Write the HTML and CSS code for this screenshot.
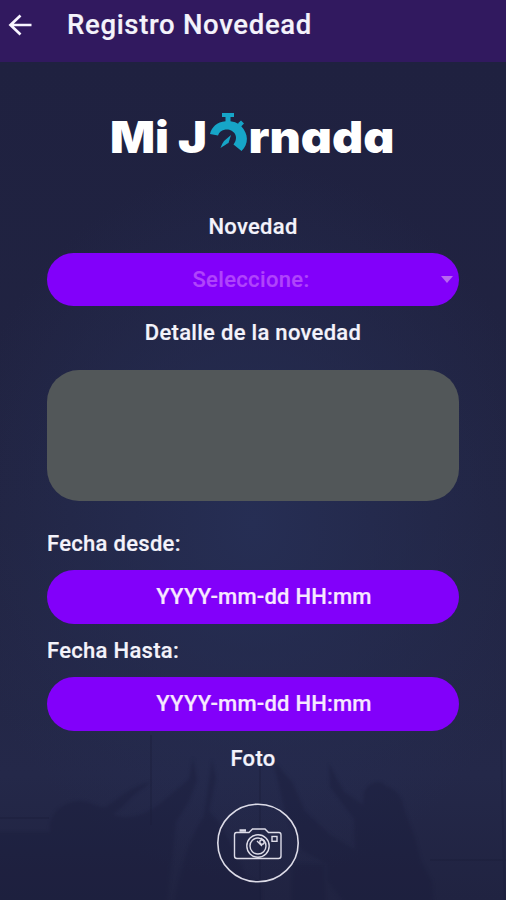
FILE: index.html
```html
<!DOCTYPE html>
<html lang="es">
<head>
<meta charset="utf-8">
<meta name="viewport" content="width=device-width, initial-scale=1">
<title>Registro Novedead</title>
<link rel="stylesheet" href="styles.css">
</head>
<body>
<div class="screen">
  <header class="bar">
    <svg class="back" width="26" height="24" viewBox="0 0 26 24"><path d="M24.500 12H3.500M13.500 2.500L3.500 12l10 9.500" /></svg>
    <h1 class="title">Registro Novedead</h1>
  </header>
  <main class="content">
    <svg class="scene" viewBox="0 0 506 190" aria-hidden="true">
      <g class="lines"><path d="M151 25V115M260 40V200M0 108H49M430 150H506M501 30L505 200"/></g>
      <g class="people">
        <path d="M-5 122H50C48 106 60 92 80 91C94 92 98 99 106 97C121 87 132 76 150 72L144 78C132 84 124 98 113 104C126 112 147 104 160 94L189 69L193 48L197 70L189 91L176 112L166 200H-5Z"/>
        <path d="M173 200C181 157 188 132 204 106L212 50L216 68L209 101L220 114L235 142L246 166L262 177V200Z"/>
        <path d="M273 50L292 72L305 101L330 125L355 140L354 109L330 77L329 54L344 82L363 95L364 82C370 71 380 69 386 76C398 80 402 88 404 99L415 128L421 151L432 171L434 200H350L327 170V154L302 140L286 105Z"/>
        <path d="M292 154H325V200H292Z"/>
      </g>
    </svg>
    <svg class="logo" width="286" height="46" viewBox="0 0 286 46" role="img" aria-label="Mi Jornada">
      <g class="word">
        <text x="0" y="41" textLength="59" lengthAdjust="spacingAndGlyphs">Mi</text>
        <text x="68" y="41" textLength="29" lengthAdjust="spacingAndGlyphs">J</text>
        <text x="138.500" y="41" textLength="146" lengthAdjust="spacingAndGlyphs">rnada</text>
      </g>
      <g class="watch">
        <path d="M112 1H124V5H120.500V9.200C124 9.700 126.500 10.500 129 12.300L128 11.300L131 8.500L134 11.500L131.300 14.300C138.500 22 139 32 131.500 39L123.500 32.500C130 24 123 16.500 115.500 17.500C111.500 18 109 20 108 23.500L100 22C101.500 15 107 10 115.500 9.200V5H112Z"/>
        <path d="M121 23L118.500 31C116.500 32 114.500 33.500 110.500 36C112 32 113 30.500 114 29Z"/>
      </g>
    </svg>
    <form class="form">
      <div class="label center">Novedad</div>
      <div class="pill select"><span class="placeholder">Seleccione:</span><i class="caret"></i></div>
      <div class="label center detail">Detalle de la novedad</div>
      <div class="area"></div>
      <div class="label from">Fecha desde:</div>
      <div class="pill date">YYYY-mm-dd HH:mm</div>
      <div class="label to">Fecha Hasta:</div>
      <div class="pill date">YYYY-mm-dd HH:mm</div>
      <div class="label center photo">Foto</div>
    </form>
    <svg class="camera" width="84" height="82" viewBox="0 0 84 82">
      <ellipse class="ring" cx="42" cy="41" rx="40.200" ry="38.800"/>
      <path d="M20.500 30.500H33L36.500 27H49L52.500 30.500H63Q65 30.500 65 33V54Q65 56.500 62.500 56.500H21Q18.500 56.500 18.500 54V33Q18.500 30.500 20.500 30.500Z"/>
      <path class="button" d="M23.500 28.500H30"/>
      <circle cx="42" cy="44" r="11.200"/><circle cx="42" cy="44" r="8"/>
      <path d="M41 39L46 44M45 36L49 40"/><circle cx="46" cy="40" r="2.200"/>
      <rect x="56" y="34.500" width="5" height="4.800"/>
    </svg>
  </main>
</div>
</body>
</html>
```
FILE: styles.css
```css
* { box-sizing: border-box; }
body { margin: 0; font-family: Roboto, "Liberation Sans", sans-serif; color: #f4f3fb; }
.screen { width: 506px; height: 900px; overflow: hidden; display: flex; flex-direction: column; }
.bar { height: 62px; flex: none; display: flex; align-items: flex-start; background: #31195f; }
.back { margin: 13px 0 0 7px; fill: none; stroke: #f8f5ff; stroke-width: 2.7; }
.title { margin: 8px 0 0 34px; font-size: 27.5px; line-height: 34px; font-weight: 500; letter-spacing: 0.68px; white-space: nowrap; -webkit-text-stroke: 0.2px; }
.content {
  position: relative; flex: 1; display: flex; flex-direction: column; align-items: center;
  background:
    radial-gradient(ellipse 300px 360px at 50% 55%, #262e54 0%, rgba(38, 46, 84, 0) 100%),
    linear-gradient(#1f2140 0%, #212442 55%, #242849 85%, #202341 100%);
}
.scene { position: absolute; left: 0; bottom: 0; width: 506px; height: 190px; overflow: visible; }
.people { fill: #1a1d3c; fill-opacity: 0.42; filter: blur(1.5px); }
.lines { fill: none; stroke: #191c3a; stroke-opacity: 0.35; stroke-width: 2; }
.logo { position: relative; flex: none; margin: 50px 0 0; overflow: visible; }
.word { fill: #fff; font-family: Inter, "Open Sans", sans-serif; font-size: 44px; font-weight: 900; font-feature-settings: "cv11" 1; }
.watch { fill: #16a5c8; }
.form { position: relative; width: 412px; }
.label { height: 28px; padding-top: 1px; font-size: 22px; line-height: 28px; font-weight: 500; letter-spacing: 0.3px; white-space: nowrap; -webkit-text-stroke: 0.2px; }
.center { text-align: center; }
.form > .label:first-child { margin-top: 54px; }
.pill { height: 54px; margin-top: 13px; padding-bottom: 1px; border-radius: 27px; background: #8200fa; font-size: 22px; font-weight: 500; line-height: 28px; display: flex; align-items: center; justify-content: center; -webkit-text-stroke: 0.2px; }
.select { position: relative; height: 53px; padding-bottom: 0; color: #b044fb; letter-spacing: 0.35px; }
.placeholder { margin-right: 4px; }
.caret { position: absolute; right: 6px; top: 23px; border: 6.5px solid transparent; border-top: 7px solid #b867ef; border-bottom: 0; }
.date { padding-left: 22px; letter-spacing: 0.2px; color: #f7e8ff; }
.detail { margin-top: 12px; }
.area { height: 131px; margin-top: 24px; border-radius: 32px; background: #525759; }
.from { margin-top: 29px; padding-top: 0; }
.from + .pill { margin-top: 12px; }
.to { margin-top: 12px; }
.photo { margin-top: 13px; }
.camera { position: relative; flex: none; margin: 30px 0 0 10px; fill: none; stroke: #dddce8; stroke-width: 1.4; }
.ring { stroke-width: 1.6; }
.button { stroke-width: 2.5; }
```
